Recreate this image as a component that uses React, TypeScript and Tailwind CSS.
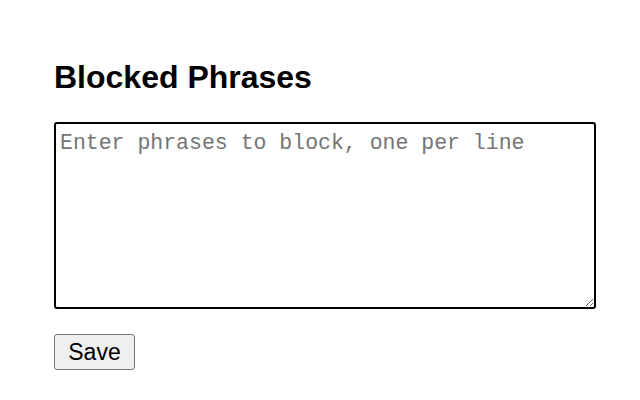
const App = () => {
  return (
    <div className="min-h-[400px] w-[640px] bg-white px-[54px] pt-[58px] font-['Liberation_Sans',Arial,sans-serif]">
      <h2 className="text-[32px] font-bold leading-[38px] text-black">Blocked Phrases</h2>
      <textarea
        className="mt-[26px] block h-[187px] w-[542px] resize-y rounded-[3px] border-2 border-black pl-[4px] pr-[5px] pt-[6px] pb-[4px] font-['Liberation_Mono',monospace] text-[21.5px] leading-[26px] outline-none placeholder:text-[#757575]"
        placeholder="Enter phrases to block, one per line"
      />
      <button
        type="button"
        className="mt-[25px] h-[36px] w-[81px] rounded-[3px] border border-[#767676] bg-[#efefef] text-[23px] leading-none text-black"
      >
        Save
      </button>
    </div>
  );
};

export default App;
